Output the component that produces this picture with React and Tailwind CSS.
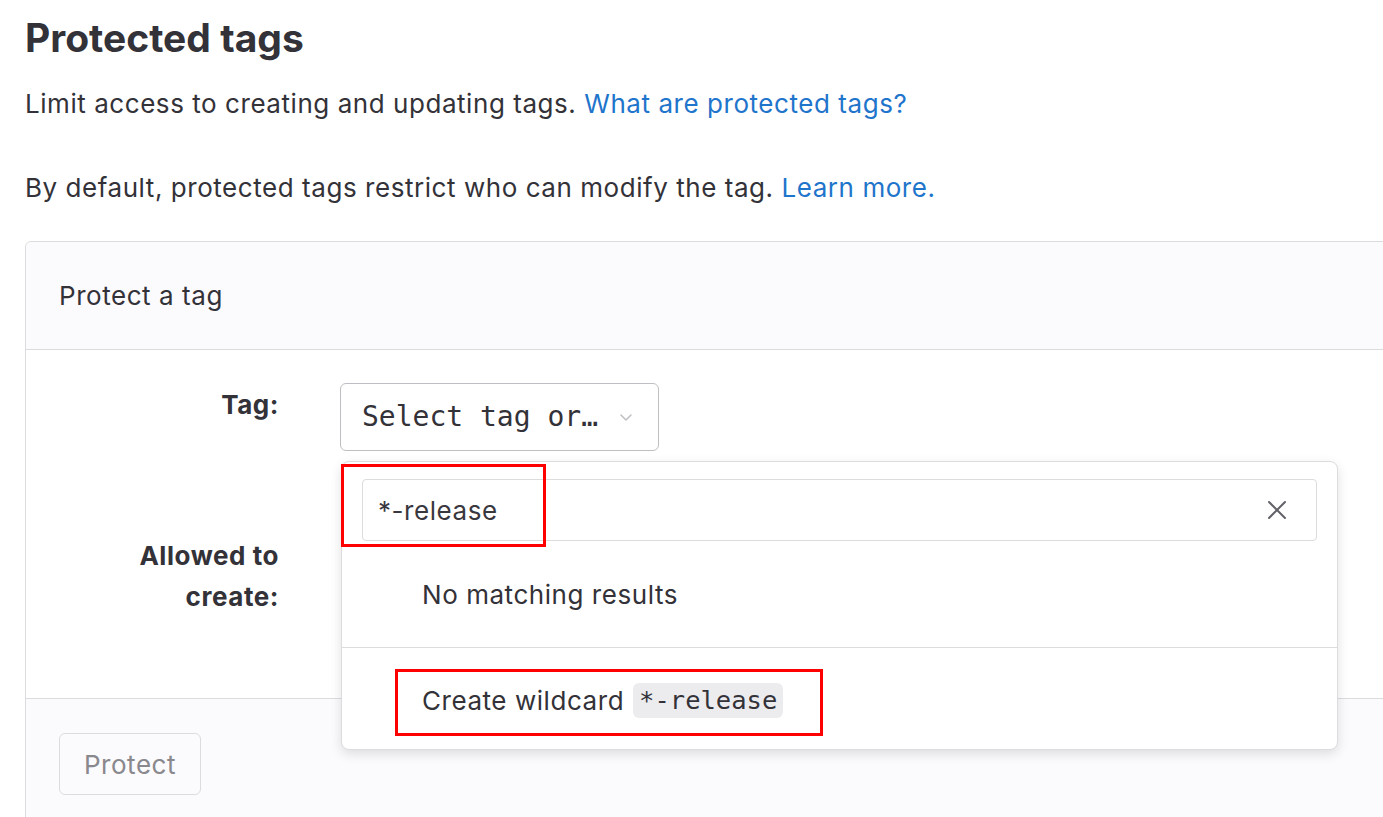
import React from 'react';

const font = { fontFamily: 'Inter, "Noto Sans", sans-serif' };
const mono = { fontFamily: '"DejaVu Sans Mono", "Liberation Mono", monospace' };

const App = () => {
  return (
    <div className="w-[1383px] h-[817px] overflow-hidden bg-white text-[#333238] pl-[25px] pt-[15px] text-[26px] tracking-[0.55px]" style={font}>
      {/* Page title */}
      <h1 className="text-[39px] font-bold leading-[46px] tracking-normal">Protected tags</h1>
      <p className="mt-[23px] leading-[40px]">
        Limit access to creating and updating tags.{' '}
        <a className="text-[#1f75cb]">What are protected tags?</a>
      </p>
      <p className="mt-[44px] leading-[40px]">
        By default, protected tags restrict who can modify the tag.{' '}
        <a className="text-[#1f75cb]">Learn more.</a>
      </p>

      {/* Card */}
      <div className="mt-[33px] w-[1400px] border border-[#dcdcde] rounded-tl-[6px]">
        <div className="h-[108px] bg-[#fbfafd] border-b border-[#dcdcde] rounded-tl-[6px] flex items-center px-[33px]">
          Protect a tag
        </div>

        <div className="relative h-[348px] bg-white pt-[33px]">
          <div className="flex items-start">
            <label className="w-[253px] text-right font-bold leading-[41px] pt-[1px]">Tag:</label>
            <button className="ml-[61px] w-[319px] h-[68px] border border-[#bfbfc3] rounded-[6px] flex items-center justify-between pl-[21px] pr-[24px] bg-white">
              <span className="text-[28px] tracking-normal text-[#333238]" style={mono}>Select tag or…</span>
              <svg width="16" height="16" viewBox="0 0 16 16" fill="none" stroke="#bfbfc3" strokeWidth="1.5" strokeLinecap="round" strokeLinejoin="round">
                <polyline points="3,6 8,11 13,6" />
              </svg>
            </button>
          </div>

          <div className="flex items-start mt-[84px]">
            <label className="w-[253px] text-right font-bold leading-[41px]">
              Allowed to
              <br />
              create:
            </label>
          </div>

          {/* Dropdown panel */}
          <div className="absolute left-[315px] top-[111px] w-[997px] h-[289px] bg-white border border-[#dcdcde] rounded-[8px] shadow-[0_4px_12px_rgba(5,5,6,0.12)] z-10">
            <div className="pt-[17px] px-[20px]">
              <div className="h-[62px] border border-[#dcdcde] rounded-[4px] flex items-center justify-between pl-[15px] pr-[27px]">
                <span className="text-[#3a383f]">*-release</span>
                <svg width="24" height="24" viewBox="0 0 24 24" fill="none" stroke="#626168" strokeWidth="2" strokeLinecap="round">
                  <line x1="4" y1="4" x2="20" y2="20" />
                  <line x1="20" y1="4" x2="4" y2="20" />
                </svg>
              </div>
            </div>
            <div className="h-[107px] flex items-center pl-[80px] border-b border-[#dcdcde]">
              No matching results
            </div>
            <div className="h-[104px] flex items-center pl-[80px]">
              Create wildcard
              <code className="ml-[9px] bg-[#ececef] rounded-[6px] px-[6px] h-[35px] flex items-center text-[25.5px] tracking-normal text-[#333238]" style={mono}>
                *-release
              </code>
            </div>

            {/* Highlight boxes */}
            <div className="absolute left-[-1px] top-[2px] w-[205px] h-[83px] border-[3px] border-[#ff0000]" />
            <div className="absolute left-[53px] top-[207px] w-[428px] h-[67px] border-[3px] border-[#ff0000]" />
          </div>
        </div>

        <div className="h-[200px] bg-[#fbfafd] border-t border-[#dcdcde] pt-[34px] pl-[33px]">
          <button className="w-[142px] h-[62px] border border-[#dcdcde] rounded-[6px] bg-[#fbfafd] text-[#89888d]">
            Protect
          </button>
        </div>
      </div>
    </div>
  );
};

export default App;
